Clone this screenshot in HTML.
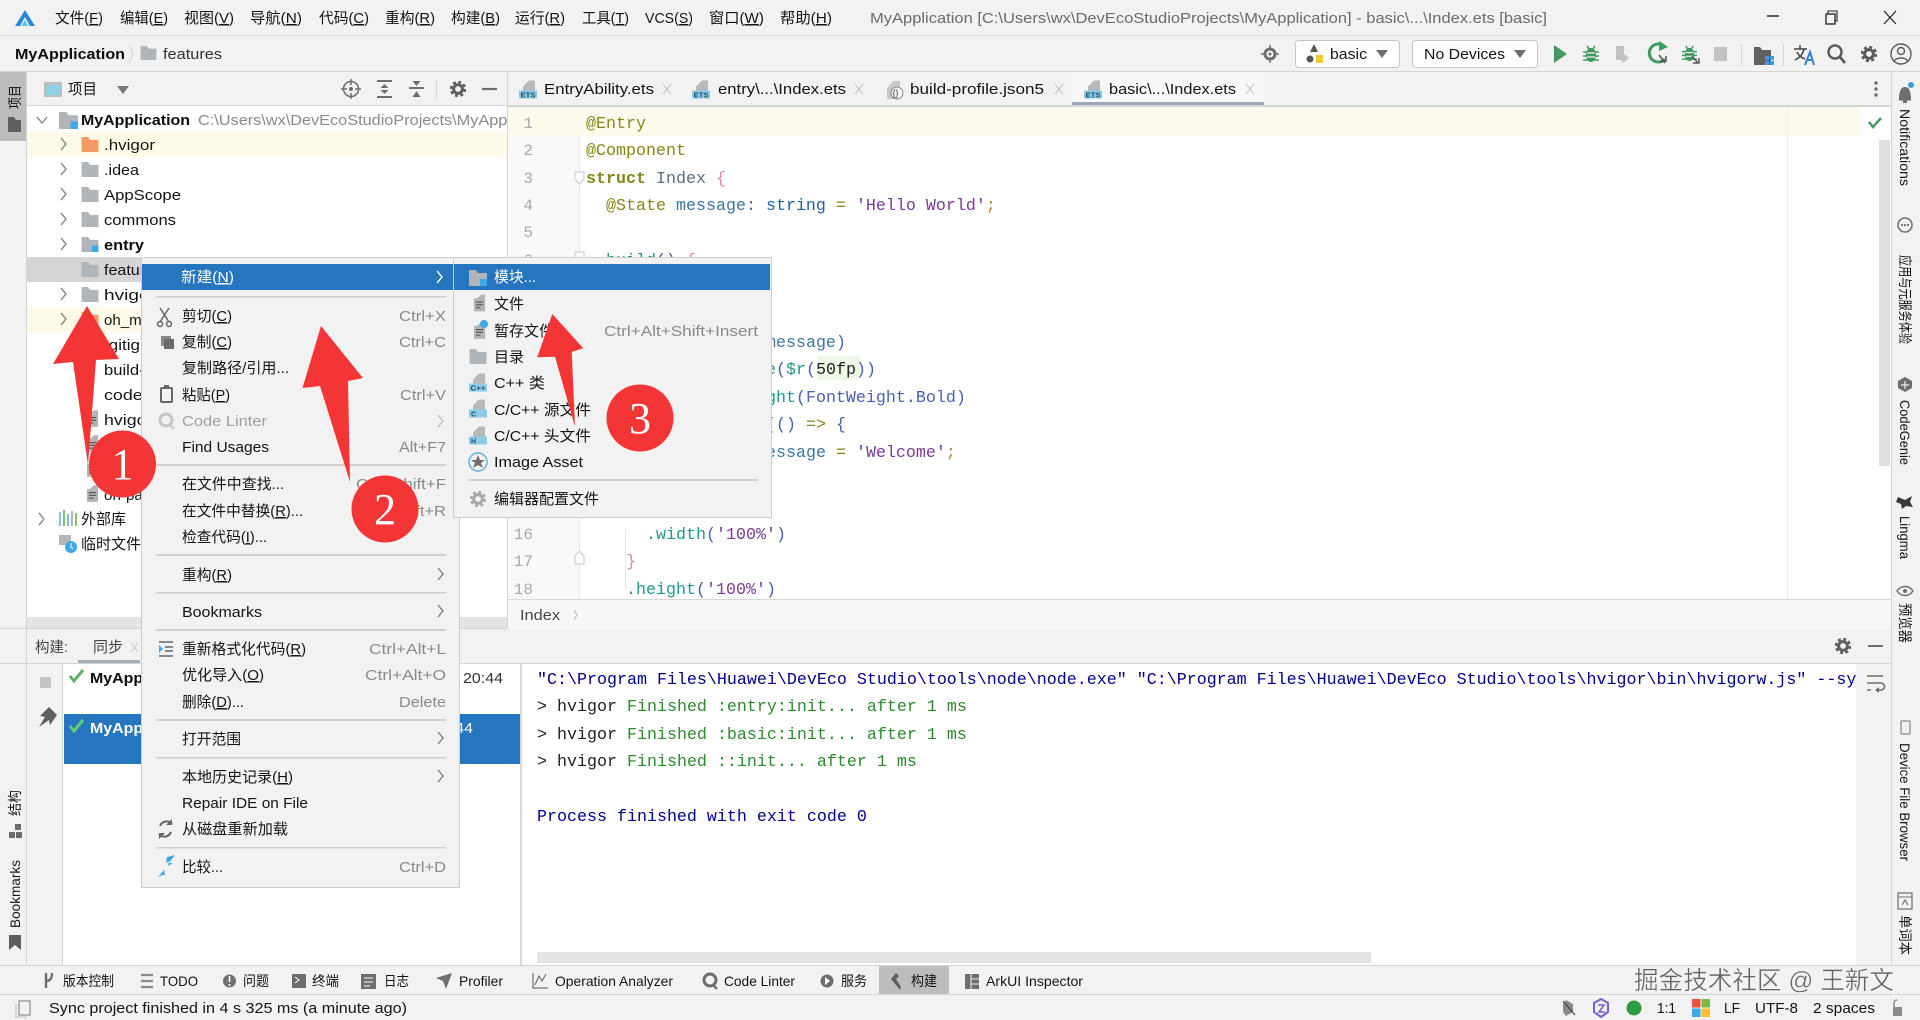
<!DOCTYPE html>
<html lang="zh"><head><meta charset="utf-8"><title>DevEco Studio</title>
<style>
html,body{margin:0;padding:0;width:1920px;height:1020px;overflow:hidden;background:#f2f2f2}
svg{display:block}
text{font-family:"Liberation Sans","Noto Sans CJK SC",sans-serif;font-size:15px;fill:#141414}
.b{font-weight:bold;fill:#0c0c0c}
.g{fill:#8a8a8a}
.t{fill:#6b6b6b}
.w{fill:#fff}
.s{font-size:14px}
.u{text-decoration:underline}
.l{font-size:7px;font-weight:bold;fill:#1c4f70}
.m{font-family:"Liberation Mono",monospace;font-size:16.67px;white-space:pre}
.n{font-family:"Liberation Mono",monospace;font-size:16px;fill:#a8a8a8;text-anchor:end}
.d{font-family:"Liberation Serif",serif;font-size:44px;fill:#fff;text-anchor:middle}
.k1{fill:#86861a}.k2{fill:#5b6c7c}.k3{fill:#d98a9a}.k4{fill:#38789f}.k5{fill:#1f5fa6}.k6{fill:#7b3a98}.k7{fill:#c08a20}.k8{fill:#1f9a8a}.k9{fill:#4a5fb0}.k0{fill:#222}
.q{fill:#00008f}.h{fill:#222}.v{fill:#2c8a2c}
</style></head><body>
<svg xmlns="http://www.w3.org/2000/svg" width="1920" height="1020" viewBox="0 0 1920 1020">
<defs>
<clipPath id="cpTree"><rect x="27" y="107" width="480" height="510"/></clipPath>
<clipPath id="cpCon"><rect x="530" y="664" width="1326" height="300"/></clipPath>
<symbol id="folder" viewBox="0 0 18 16"><path d="M0 0h7l2 3h9v13H0z" fill="#b0b5ba"/></symbol>
<symbol id="folderO" viewBox="0 0 18 16"><path d="M0 0h7l2 3h9v13H0z" fill="#f69a63"/></symbol>
<symbol id="mod" viewBox="0 0 18 16"><path d="M0 0h7l2 3h9v13H0z" fill="#b0b5ba"/><rect x="11" y="9" width="7" height="7" fill="#3fa9e8"/></symbol>
<symbol id="file" viewBox="0 0 14 18"><path d="M9 0L4 4H1v14h12V0z" fill="#b5b5b5"/><path d="M3 8h8M3 11h8M3 14h5" stroke="#555" stroke-width="1.200"/></symbol>
<symbol id="ets" viewBox="0 0 18 18"><path d="M10 0h6v10H4v-4z" fill="#b8b8b8"/><rect x="0" y="10" width="18" height="8" fill="#8ccbe6"/><text class="l" x="1.500" y="17" textLength="15" lengthAdjust="spacingAndGlyphs">ETS</text></symbol>
<symbol id="cpp" viewBox="0 0 18 18"><path d="M10 0h6v10H4v-4z" fill="#b8b8b8"/><rect x="0" y="10" width="18" height="8" fill="#8ccbe6"/><text class="l" x="1.500" y="17" textLength="15" lengthAdjust="spacingAndGlyphs">C++</text></symbol>
<symbol id="cc" viewBox="0 0 18 18"><path d="M10 0h6v10H4v-4z" fill="#b8b8b8"/><rect x="0" y="10" width="18" height="8" fill="#8ccbe6"/><text class="l" x="2" y="17">C</text></symbol>
<symbol id="hh" viewBox="0 0 18 18"><path d="M10 0h6v10H4v-4z" fill="#b8b8b8"/><rect x="0" y="10" width="18" height="8" fill="#8ccbe6"/><text class="l" x="2" y="17">H</text></symbol>
<symbol id="gear" viewBox="0 0 16 16"><circle cx="8" cy="8" r="4.400" fill="none" stroke="currentColor" stroke-width="3"/><circle cx="8" cy="8" r="7" fill="none" stroke="currentColor" stroke-width="2.400" stroke-dasharray="3 2.500"/></symbol>
<symbol id="bug" viewBox="0 0 16 18"><ellipse cx="8" cy="10" rx="5" ry="7" fill="currentColor"/><path d="M0 7h16M0 11h16M0 15h16M4 1l2 3M12 1l-2 3" stroke="currentColor" stroke-width="1.600"/><path d="M4 8h8M4 12h8" stroke="#f2f2f2" stroke-width="1.200"/></symbol>
</defs>

<rect width="1920" height="1020" fill="#f2f2f2"/>

<!-- title bar -->
<rect x="0" y="35" width="1920" height="1" fill="#d8d8d8"/>
<path d="M25 10l10 16h-5l-5-9-5 9h-5z" fill="#2a85dc"/><path d="M25 20l3.500 6h-7z" fill="#5fc4f2"/>
<text x="55" y="23" textLength="48" lengthAdjust="spacingAndGlyphs">文件(<tspan class="u">F</tspan>)</text>
<text x="120" y="23" textLength="48" lengthAdjust="spacingAndGlyphs">编辑(<tspan class="u">E</tspan>)</text>
<text x="184" y="23" textLength="50" lengthAdjust="spacingAndGlyphs">视图(<tspan class="u">V</tspan>)</text>
<text x="250" y="23" textLength="52" lengthAdjust="spacingAndGlyphs">导航(<tspan class="u">N</tspan>)</text>
<text x="319" y="23" textLength="50" lengthAdjust="spacingAndGlyphs">代码(<tspan class="u">C</tspan>)</text>
<text x="385" y="23" textLength="50" lengthAdjust="spacingAndGlyphs">重构(<tspan class="u">R</tspan>)</text>
<text x="451" y="23" textLength="49" lengthAdjust="spacingAndGlyphs">构建(<tspan class="u">B</tspan>)</text>
<text x="515" y="23" textLength="50" lengthAdjust="spacingAndGlyphs">运行(<tspan class="u">R</tspan>)</text>
<text x="582" y="23" textLength="47" lengthAdjust="spacingAndGlyphs">工具(<tspan class="u">T</tspan>)</text>
<text x="645" y="23" textLength="48" lengthAdjust="spacingAndGlyphs">VCS(<tspan class="u">S</tspan>)</text>
<text x="709" y="23" textLength="55" lengthAdjust="spacingAndGlyphs">窗口(<tspan class="u">W</tspan>)</text>
<text x="780" y="23" textLength="52" lengthAdjust="spacingAndGlyphs">帮助(<tspan class="u">H</tspan>)</text>
<text x="870" y="23" textLength="677" lengthAdjust="spacingAndGlyphs" class="t">MyApplication [C:\Users\wx\DevEcoStudioProjects\MyApplication] - basic\...\Index.ets [basic]</text>
<path d="M1767 16h12" stroke="#222" stroke-width="1.400"/>
<rect x="1826" y="14" width="9" height="10" fill="none" stroke="#222" stroke-width="1.300"/><path d="M1828 14v-3h9v10h-2" fill="none" stroke="#222" stroke-width="1.100"/>
<path d="M1884 11l12 13M1896 11l-12 13" stroke="#222" stroke-width="1.200"/>

<!-- nav bar -->
<rect x="0" y="71" width="1920" height="1" fill="#d4d4d4"/>
<text x="15" y="59" textLength="110" lengthAdjust="spacingAndGlyphs" class="b">MyApplication</text>
<path d="M129 45l4 9-4 9" fill="none" stroke="#cfcfcf"/>
<use href="#folder" x="140" y="46" width="17" height="14"/>
<text x="163" y="59" textLength="59" lengthAdjust="spacingAndGlyphs" style="fill:#333">features</text>
<circle cx="1270" cy="54" r="5" fill="none" stroke="#6e6e6e" stroke-width="3"/><circle cx="1270" cy="54" r="1.500" fill="#6e6e6e"/><path d="M1270 45v3M1270 60v3M1261 54h3M1276 54h3" stroke="#6e6e6e" stroke-width="1.500"/>
<rect x="1295.500" y="40.500" width="104" height="27" rx="3" fill="#fff" stroke="#c6c6c6"/>
<path d="M1314 44l4 8h-8z" fill="#555"/><circle cx="1310" cy="59" r="3.500" fill="#555"/><rect x="1316" y="55" width="7" height="8" fill="#f3c63c"/>
<text x="1330" y="59" textLength="37" lengthAdjust="spacingAndGlyphs">basic</text>
<path d="M1376 50h12l-6 8z" fill="#6e6e6e"/>
<rect x="1412.500" y="40.500" width="125" height="27" rx="3" fill="#fff" stroke="#c6c6c6"/>
<text x="1424" y="59" textLength="81" lengthAdjust="spacingAndGlyphs">No Devices</text>
<path d="M1514 50h12l-6 8z" fill="#6e6e6e"/>
<path d="M1554 45l13 9-13 9z" fill="#3f9b5f"/>
<use href="#bug" x="1583" y="45" width="16" height="18" color="#3f9b5f"/>
<path d="M1616 46h8v8l5 4-6 5-2-3h-5z" fill="#c2c2c2"/>
<path d="M1665 47a9 9 0 1 0 0 12" fill="none" stroke="#3f9b5f" stroke-width="3"/><path d="M1659 41l9 6-9 4z" fill="#3f9b5f"/><path d="M1659 55l6 8M1660 62l6-1 0-5" stroke="#555" stroke-width="1.500" fill="none"/>
<use href="#bug" x="1682" y="45" width="15" height="17" color="#3f9b5f"/><path d="M1692 56l6 7M1693 63h6v-5" stroke="#555" stroke-width="1.500" fill="none"/>
<rect x="1714" y="47" width="13" height="14" fill="#c2c2c2"/>
<rect x="1741" y="44" width="1" height="22" fill="#d4d4d4"/>
<path d="M1754 47h6l2 3h9v15h-17z" fill="#606060"/><rect x="1765" y="56" width="4" height="4" fill="#3f9be0"/><rect x="1770" y="56" width="4" height="4" fill="#3f9be0"/><rect x="1765" y="61" width="4" height="4" fill="#3f9be0"/><rect x="1770" y="61" width="4" height="4" fill="#3f9be0"/>
<rect x="1783" y="44" width="1" height="22" fill="#d4d4d4"/>
<path d="M1794 49h13M1800 45v4M1804 49c-1 6-5 9-9 11M1797 52c2 4 5 6 8 7" fill="none" stroke="#444" stroke-width="1.500"/><path d="M1805 65l5-13 4 13M1807 60h6" fill="none" stroke="#2f7fd0" stroke-width="2"/>
<circle cx="1835" cy="52" r="6.500" fill="none" stroke="#5a5a5a" stroke-width="2.400"/><path d="M1840 57l5 6" stroke="#5a5a5a" stroke-width="2.600"/>
<use href="#gear" x="1861" y="46" width="16" height="16" color="#5a5a5a"/>
<circle cx="1901" cy="54" r="10" fill="none" stroke="#5a5a5a" stroke-width="1.400"/><circle cx="1901" cy="51" r="3.500" fill="none" stroke="#5a5a5a" stroke-width="1.400"/><path d="M1894 61c3-4 11-4 14 0" fill="none" stroke="#5a5a5a" stroke-width="1.400"/>

<!-- left stripe -->
<rect x="0" y="72" width="27" height="69" fill="#bdbdbd"/>
<rect x="26" y="72" width="1" height="893" fill="#d4d4d4"/>
<text transform="translate(20,109) rotate(-90)" class="s" textLength="24" lengthAdjust="spacingAndGlyphs">项目</text>
<path d="M8 117h6l2 3h5v12H8z" fill="#5f5f5f"/>
<text transform="translate(20,816) rotate(-90)" class="s" textLength="26" lengthAdjust="spacingAndGlyphs">结构</text>
<rect x="15" y="824" width="6" height="6" fill="#6b6b6b"/><rect x="9" y="832" width="6" height="6" fill="#6b6b6b"/><rect x="16" y="832" width="6" height="6" fill="#6b6b6b"/>
<text transform="translate(20,928) rotate(-90)" class="s" textLength="68" lengthAdjust="spacingAndGlyphs">Bookmarks</text>
<path d="M9 935h12v15l-6-5-6 5z" fill="#5f5f5f"/>

<!-- project panel -->
<rect x="27" y="72" width="480" height="34" fill="#f2f2f2"/>
<rect x="27" y="105" width="480" height="1" fill="#d4d4d4"/>
<rect x="44" y="82" width="18" height="15" fill="#bdbdbd"/><rect x="46" y="85" width="14" height="10" fill="#8ed0ea"/>
<text x="68" y="94" textLength="29" lengthAdjust="spacingAndGlyphs">项目</text>
<path d="M117 86h12l-6 8z" fill="#777"/>
<circle cx="351" cy="89" r="7.500" fill="none" stroke="#6e6e6e" stroke-width="1.500"/><circle cx="351" cy="89" r="2" fill="#6e6e6e"/><path d="M351 79v6M351 93v6M341 89h6M355 89h6" stroke="#6e6e6e" stroke-width="1.500"/>
<path d="M377 81h15M377 97h15" stroke="#6e6e6e" stroke-width="2"/><path d="M384.500 84l4 4h-8zM384.500 94l4-4h-8z" fill="#6e6e6e"/>
<path d="M409 88h15" stroke="#6e6e6e" stroke-width="2"/><path d="M416.500 86l4-5h-8zM416.500 91l4 6h-8z" fill="#6e6e6e"/>
<rect x="436" y="80" width="1" height="20" fill="#d4d4d4"/>
<use href="#gear" x="450" y="81" width="16" height="16" color="#5f5f5f"/>
<path d="M482 89h15" stroke="#6e6e6e" stroke-width="2.200"/>
<rect x="27" y="106" width="480" height="511" fill="#fff"/>
<rect x="27" y="132" width="480" height="25" fill="#fdfbe7"/>
<rect x="27" y="307" width="480" height="25" fill="#fdfbe7"/>
<rect x="27" y="257" width="480" height="25" fill="#d5d5d5"/>
<g fill="none" stroke="#8a8a8a" stroke-width="1.400">
<path d="M37 117l5 6 5-6"/>
<path d="M61 138l5 6-5 6M61 163l5 6-5 6M61 188l5 6-5 6M61 213l5 6-5 6M61 238l5 6-5 6M61 288l5 6-5 6M61 313l5 6-5 6M39 513l5 6-5 6"/>
</g>
<use href="#mod" x="59" y="112" width="19" height="17"/>
<use href="#folderO" x="81" y="137" width="18" height="15"/>
<use href="#folder" x="81" y="162" width="18" height="15"/>
<use href="#folder" x="81" y="187" width="18" height="15"/>
<use href="#folder" x="81" y="212" width="18" height="15"/>
<use href="#mod" x="81" y="237" width="18" height="15"/>
<use href="#folder" x="81" y="262" width="18" height="15"/>
<use href="#folder" x="81" y="287" width="18" height="15"/>
<use href="#folderO" x="81" y="312" width="18" height="15"/>
<use href="#file" x="86" y="410" width="13" height="17"/>
<use href="#file" x="86" y="435" width="13" height="17"/>
<use href="#file" x="86" y="460" width="13" height="17"/>
<use href="#file" x="86" y="485" width="13" height="17"/>
<g clip-path="url(#cpTree)">
<text x="81" y="125" textLength="109" lengthAdjust="spacingAndGlyphs" class="b">MyApplication</text>
<text x="198" y="125" textLength="360" lengthAdjust="spacingAndGlyphs" class="g">C:\Users\wx\DevEcoStudioProjects\MyApplication</text>
</g>
<text x="104" y="150" textLength="51" lengthAdjust="spacingAndGlyphs">.hvigor</text>
<text x="104" y="175" textLength="35" lengthAdjust="spacingAndGlyphs">.idea</text>
<text x="104" y="200" textLength="77" lengthAdjust="spacingAndGlyphs">AppScope</text>
<text x="104" y="225" textLength="72" lengthAdjust="spacingAndGlyphs">commons</text>
<text x="104" y="250" textLength="40" lengthAdjust="spacingAndGlyphs" class="b">entry</text>
<text x="104" y="275" textLength="58" lengthAdjust="spacingAndGlyphs">features</text>
<text x="104" y="300" textLength="52" lengthAdjust="spacingAndGlyphs">hvigor</text>
<text x="104" y="325" textLength="82" lengthAdjust="spacingAndGlyphs">oh_modules</text>
<text x="104" y="350" textLength="70" lengthAdjust="spacingAndGlyphs">.gitignore</text>
<text x="104" y="375" textLength="130" lengthAdjust="spacingAndGlyphs">build-profile.json5</text>
<text x="104" y="400" textLength="130" lengthAdjust="spacingAndGlyphs">code-linter.json5</text>
<text x="104" y="425" textLength="90" lengthAdjust="spacingAndGlyphs">hvigorfile.ts</text>
<text x="104" y="500" textLength="120" lengthAdjust="spacingAndGlyphs">oh-package.json5</text>
<rect x="59" y="512" width="2" height="14" fill="#7cc4e2"/><rect x="63" y="510" width="2" height="16" fill="#8bbf6a"/><rect x="67" y="514" width="2" height="12" fill="#7cc4e2"/><rect x="71" y="511" width="2" height="15" fill="#b5b5b5"/><rect x="75" y="513" width="2" height="13" fill="#8bbf6a"/>
<text x="81" y="524" textLength="45" lengthAdjust="spacingAndGlyphs">外部库</text>
<rect x="59" y="535" width="12" height="10" fill="#b5b5b5"/><circle cx="71" cy="547" r="6" fill="#3fa9e8"/><path d="M71 543v4l2 2" stroke="#fff" fill="none"/>
<text x="81" y="549" textLength="60" lengthAdjust="spacingAndGlyphs">临时文件</text>
<rect x="27" y="617" width="480" height="11" fill="#e4e4e4"/>
<rect x="0" y="628" width="1892" height="1" fill="#d4d4d4"/>

<!-- editor tabs -->
<rect x="507" y="72" width="1" height="556" fill="#d4d4d4"/>
<rect x="1072" y="72" width="192" height="34" fill="#f8f8f8"/>
<rect x="1072" y="102" width="192" height="4" fill="#9ca8b8"/>
<rect x="508" y="105" width="1384" height="2" fill="#d4d4d4"/>
<use href="#ets" x="519" y="80" width="18" height="19"/>
<text x="544" y="94" textLength="110" lengthAdjust="spacingAndGlyphs">EntryAbility.ets</text>
<path d="M663 84l8 10M671 84l-8 10" stroke="#c8c8c8" stroke-width="1.200"/>
<use href="#ets" x="692" y="80" width="18" height="19"/>
<text x="718" y="94" textLength="128" lengthAdjust="spacingAndGlyphs">entry\...\Index.ets</text>
<path d="M855 84l8 10M863 84l-8 10" stroke="#c8c8c8" stroke-width="1.200"/>
<path d="M893 81h7v18h-13v-11z" fill="#c8c8c8"/><circle cx="897" cy="93" r="6" fill="#f2f2f2" stroke="#888"/><text x="892.500" y="96" style="font-size:9px;fill:#444">{}</text>
<text x="910" y="94" textLength="134" lengthAdjust="spacingAndGlyphs">build-profile.json5</text>
<path d="M1055 84l8 10M1063 84l-8 10" stroke="#c8c8c8" stroke-width="1.200"/>
<use href="#ets" x="1084" y="80" width="18" height="19"/>
<text x="1109" y="94" textLength="127" lengthAdjust="spacingAndGlyphs">basic\...\Index.ets</text>
<path d="M1246 84l8 10M1254 84l-8 10" stroke="#c8c8c8" stroke-width="1.200"/>
<circle cx="1876" cy="83" r="1.700" fill="#6e6e6e"/><circle cx="1876" cy="89" r="1.700" fill="#6e6e6e"/><circle cx="1876" cy="95" r="1.700" fill="#6e6e6e"/>

<!-- editor -->
<rect x="508" y="107" width="1384" height="492" fill="#fff"/>
<rect x="508" y="107" width="71" height="492" fill="#f9f9f9"/>
<rect x="579" y="107" width="1" height="492" fill="#e8e8e8"/>
<rect x="508" y="107" width="1352" height="29" fill="#fcfaed"/>
<rect x="1787" y="107" width="1" height="492" fill="#ececec"/>
<rect x="1879" y="140" width="11" height="326" fill="#e0e0e0"/>
<path d="M1869 122l4 5 8-9" fill="none" stroke="#4f9a6a" stroke-width="2.600"/>
<rect x="625" y="530" width="1" height="60" fill="#e6e6e6"/>
<path d="M575 172h9v7l-4.500 5-4.500-5z" fill="#fff" stroke="#c8c8c8"/>
<path d="M575 252h9v7l-4.500 5-4.500-5z" fill="#fff" stroke="#c8c8c8"/>
<path d="M575 564h9v-8l-4.500-5-4.500 5z" fill="#fff" stroke="#c8c8c8"/>
<text class="n" x="533" y="128">1</text><text class="n" x="533" y="155">2</text><text class="n" x="533" y="183">3</text><text class="n" x="533" y="210">4</text><text class="n" x="533" y="237">5</text><text class="n" x="533" y="265">6</text>
<text class="n" x="533" y="539">16</text><text class="n" x="533" y="566">17</text><text class="n" x="533" y="594">18</text>
<text class="m" x="586" y="128"><tspan class="k1">@Entry</tspan></text>
<text class="m" x="586" y="155"><tspan class="k1">@Component</tspan></text>
<text class="m" x="586" y="183"><tspan class="k1" font-weight="bold">struct</tspan><tspan class="k2"> Index </tspan><tspan class="k3">{</tspan></text>
<text class="m" x="606" y="210"><tspan class="k1">@State</tspan><tspan class="k4"> message</tspan><tspan class="k2">: </tspan><tspan class="k5">string</tspan><tspan class="k1"> = </tspan><tspan class="k6">'Hello World'</tspan><tspan class="k7">;</tspan></text>
<text class="m" x="606" y="265"><tspan class="k8">build</tspan><tspan class="k9">()</tspan><tspan class="k3"> {</tspan></text>
<rect x="818" y="356" width="42" height="24" fill="#eef7e6"/>
<text class="m" x="666" y="347"><tspan class="k8">Text</tspan><tspan class="k9">(</tspan><tspan class="k4">this.message</tspan><tspan class="k9">)</tspan></text>
<text class="m" x="686" y="374"><tspan class="k8">.fontSize</tspan><tspan class="k9">(</tspan><tspan class="k8">$r</tspan><tspan class="k9">(</tspan><tspan class="k0">50fp</tspan><tspan class="k9">))</tspan></text>
<text class="m" x="686" y="402"><tspan class="k8">.fontWeight</tspan><tspan class="k9">(FontWeight.Bold)</tspan></text>
<text class="m" x="686" y="429"><tspan class="k8">.onClick</tspan><tspan class="k9">(()</tspan><tspan class="k1"> =&gt; </tspan><tspan class="k9">{</tspan></text>
<text class="m" x="706" y="457"><tspan class="k4">this.message</tspan><tspan class="k1"> = </tspan><tspan class="k6">'Welcome'</tspan><tspan class="k7">;</tspan></text>
<text class="m" x="646" y="539"><tspan class="k8">.width</tspan><tspan class="k9">(</tspan><tspan class="k6">'100%'</tspan><tspan class="k9">)</tspan></text>
<text class="m" x="626" y="566"><tspan class="k3">}</tspan></text>
<text class="m" x="626" y="594"><tspan class="k8">.height</tspan><tspan class="k9">(</tspan><tspan class="k6">'100%'</tspan><tspan class="k9">)</tspan></text>
<rect x="508" y="599" width="1384" height="30" fill="#f7f7f7"/>
<rect x="508" y="599" width="1384" height="1" fill="#d8d8d8"/>
<text x="520" y="620" textLength="40" lengthAdjust="spacingAndGlyphs" style="fill:#444">Index</text>
<path d="M574 610l3 5-3 5" fill="none" stroke="#bcbcbc" stroke-width="1.200"/>

<!-- build window -->
<rect x="0" y="663" width="1892" height="1" fill="#d4d4d4"/>
<text x="35" y="652" textLength="33" lengthAdjust="spacingAndGlyphs" style="fill:#444">构建:</text>
<text x="93" y="652" textLength="30" lengthAdjust="spacingAndGlyphs" style="fill:#444">同步</text>
<rect x="78" y="660" width="62" height="3" fill="#a4afbd"/>
<path d="M131 643l7 9M138 643l-7 9" stroke="#c8c8c8"/>
<use href="#gear" x="1835" y="638" width="16" height="16" color="#5f5f5f"/>
<path d="M1868 646h15" stroke="#6e6e6e" stroke-width="2"/>
<rect x="62" y="664" width="1" height="301" fill="#d4d4d4"/>
<rect x="63" y="664" width="457" height="301" fill="#fff"/>
<rect x="520" y="664" width="2" height="301" fill="#d8d8d8"/>
<rect x="522" y="664" width="1334" height="301" fill="#fff"/>
<rect x="40" y="677" width="11" height="11" fill="#c4c4c4"/>
<path d="M49 707l-9 9 5 1-6 10 10-7 1 5 7-10z" fill="#5f5f5f"/>
<path d="M70 676l4 5 9-11" fill="none" stroke="#5cb36b" stroke-width="3"/>
<text x="90" y="683" textLength="109" lengthAdjust="spacingAndGlyphs" class="b">MyApplication</text>
<text x="463" y="683" textLength="40" lengthAdjust="spacingAndGlyphs" style="fill:#333">20:44</text>
<rect x="64" y="714" width="456" height="50" fill="#2675bf"/>
<path d="M70 726l4 5 9-11" fill="none" stroke="#66cc77" stroke-width="3"/>
<text x="90" y="733" textLength="109" lengthAdjust="spacingAndGlyphs" class="b" style="fill:#fff">MyApplication</text>
<text x="433" y="733" textLength="40" lengthAdjust="spacingAndGlyphs" class="w">20:44</text>
<g clip-path="url(#cpCon)">
<text class="m q" x="537" y="684">"C:\Program Files\Huawei\DevEco Studio\tools\node\node.exe" "C:\Program Files\Huawei\DevEco Studio\tools\hvigor\bin\hvigorw.js" --sy</text>
<text class="m" x="537" y="711"><tspan class="h">&gt; hvigor </tspan><tspan class="v">Finished :entry:init... after 1 ms</tspan></text>
<text class="m" x="537" y="739"><tspan class="h">&gt; hvigor </tspan><tspan class="v">Finished :basic:init... after 1 ms</tspan></text>
<text class="m" x="537" y="766"><tspan class="h">&gt; hvigor </tspan><tspan class="v">Finished ::init... after 1 ms</tspan></text>
<text class="m q" x="537" y="821">Process finished with exit code 0</text>
</g>
<rect x="537" y="952" width="834" height="11" fill="#e3e3e3"/>
<path d="M1867 676h16M1867 683h14a3 3 0 0 1 0 7h-5M1867 690h4" fill="none" stroke="#6e6e6e" stroke-width="1.600"/><path d="M1879 687l-4 3 4 3z" fill="#6e6e6e"/>

<!-- right stripe -->
<rect x="1891" y="72" width="1" height="893" fill="#d4d4d4"/>
<path d="M1899 100c0-11 3-13 6-13s6 2 6 13zM1897 100h16l-8 1z" fill="#6e6e6e"/><circle cx="1911" cy="85" r="3" fill="#3f9be0"/><path d="M1903 102h4" stroke="#6e6e6e" stroke-width="2"/>
<text transform="translate(1900,109) rotate(90)" class="s" textLength="77" lengthAdjust="spacingAndGlyphs">Notifications</text>
<circle cx="1905" cy="225" r="7" fill="none" stroke="#6e6e6e" stroke-width="1.500"/><circle cx="1902" cy="225" r="1.100" fill="#6e6e6e"/><circle cx="1905" cy="225" r="1.100" fill="#6e6e6e"/><circle cx="1908" cy="225" r="1.100" fill="#6e6e6e"/>
<text transform="translate(1900,255) rotate(90)" class="s" textLength="89" lengthAdjust="spacingAndGlyphs">应用与元服务体验</text>
<path d="M1905 377l7 4v7l-7 4-7-4v-7z" fill="#6e6e6e"/><path d="M1905 381v8M1901 385h8" stroke="#f2f2f2" stroke-width="1.200"/>
<text transform="translate(1900,400) rotate(90)" class="s" textLength="65" lengthAdjust="spacingAndGlyphs">CodeGenie</text>
<path d="M1898 497l7 3 7-4-2 6 3 5-7-1-4 3-1-5-5-2z" fill="#3a3a3a"/>
<text transform="translate(1900,516) rotate(90)" class="s" textLength="43" lengthAdjust="spacingAndGlyphs">Lingma</text>
<path d="M1897 591c4-6 12-6 16 0-4 6-12 6-16 0z" fill="none" stroke="#6e6e6e" stroke-width="1.400"/><circle cx="1905" cy="591" r="2" fill="#6e6e6e"/>
<text transform="translate(1900,603) rotate(90)" class="s" textLength="40" lengthAdjust="spacingAndGlyphs">预览器</text>
<rect x="1901" y="721" width="9" height="13" rx="1" fill="none" stroke="#9a9a9a" stroke-width="1.500"/>
<text transform="translate(1900,743) rotate(90)" class="s" textLength="118" lengthAdjust="spacingAndGlyphs">Device File Browser</text>
<rect x="1898" y="893" width="14" height="16" fill="none" stroke="#6e6e6e" stroke-width="1.200"/><path d="M1898 897h14M1902 905l3-5 3 5" fill="none" stroke="#6e6e6e" stroke-width="1.100"/>
<text transform="translate(1900,915) rotate(90)" class="s" textLength="40" lengthAdjust="spacingAndGlyphs">单词本</text>

<!-- bottom tool bar -->
<rect x="0" y="965" width="1920" height="1" fill="#d4d4d4"/>
<rect x="0" y="994" width="1920" height="1" fill="#d4d4d4"/>
<rect x="879" y="966" width="70" height="28" fill="#bdbdbd"/>
<path d="M46 973v15M46 981c3 0 6-1 6-8" fill="none" stroke="#6e6e6e" stroke-width="2.400"/>
<text x="63" y="986" class="s" textLength="51" lengthAdjust="spacingAndGlyphs">版本控制</text>
<path d="M141 975h12M141 981h12M141 987h12" stroke="#8a8a8a" stroke-width="2.200"/>
<text x="160" y="986" class="s" textLength="38" lengthAdjust="spacingAndGlyphs">TODO</text>
<circle cx="229.500" cy="981" r="6.500" fill="#6e6e6e"/><path d="M229.500 976v6M229.500 984v2" stroke="#fff" stroke-width="1.600"/>
<text x="243" y="986" class="s" textLength="26" lengthAdjust="spacingAndGlyphs">问题</text>
<rect x="292" y="974" width="14" height="14" fill="#6e6e6e"/><path d="M295 977l4 3-4 3" fill="none" stroke="#fff"/>
<text x="312" y="986" class="s" textLength="27" lengthAdjust="spacingAndGlyphs">终端</text>
<rect x="361" y="974" width="15" height="15" fill="#6e6e6e"/><path d="M364 978h9M364 982h9M364 986h6" stroke="#fff"/>
<text x="384" y="986" class="s" textLength="25" lengthAdjust="spacingAndGlyphs">日志</text>
<path d="M452 973l-16 5 7 3 3 8 3-8z" fill="#6e6e6e"/>
<text x="459" y="986" class="s" textLength="44" lengthAdjust="spacingAndGlyphs">Profiler</text>
<path d="M533 973v15h15M535 985l4-9 3 5 4-7" fill="none" stroke="#6e6e6e" stroke-width="1.200"/>
<text x="555" y="986" class="s" textLength="118" lengthAdjust="spacingAndGlyphs">Operation Analyzer</text>
<circle cx="710" cy="980" r="6" fill="none" stroke="#6e6e6e" stroke-width="3"/><path d="M713 985l4 4" stroke="#6e6e6e" stroke-width="2.400"/>
<text x="724" y="986" class="s" textLength="71" lengthAdjust="spacingAndGlyphs">Code Linter</text>
<circle cx="827" cy="981" r="6.500" fill="#6e6e6e"/><path d="M825 977l5 4-5 4z" fill="#fff"/>
<text x="841" y="986" class="s" textLength="26" lengthAdjust="spacingAndGlyphs">服务</text>
<path d="M896 973l-5 6 9 11 1-3-5-8 3-3z" fill="#5f5f5f"/>
<text x="911" y="986" class="s" textLength="26" lengthAdjust="spacingAndGlyphs">构建</text>
<rect x="965" y="974" width="14" height="15" fill="#6e6e6e"/><path d="M971 974v15M971 979h8M971 984h8" stroke="#f2f2f2"/>
<text x="986" y="986" class="s" textLength="97" lengthAdjust="spacingAndGlyphs">ArkUI Inspector</text>
<text x="1634" y="989" style="font-size:25px;fill:#666;stroke:#fff;stroke-width:.3px" textLength="260" lengthAdjust="spacingAndGlyphs">掘金技术社区 @ 王新文</text>

<!-- status bar -->
<rect x="19" y="1001" width="11" height="14" fill="none" stroke="#8a8a8a" stroke-width="1.200"/><path d="M16 1004v13h11" fill="none" stroke="#bcbcbc"/>
<text x="49" y="1013" textLength="358" lengthAdjust="spacingAndGlyphs">Sync project finished in 4 s 325 ms (a minute ago)</text>
<path d="M1566 1000l7 4v8l-7 4-3-4v-8z" fill="#8a8a8a"/><path d="M1563 1001l12 14" stroke="#444" stroke-width="1.200"/>
<path d="M1601 999l7 4v9l-7 5-7-5v-9z" fill="none" stroke="#7a5fd0" stroke-width="2"/><path d="M1598 1005h6l-5 7h6" fill="none" stroke="#7a5fd0" stroke-width="1.600"/>
<circle cx="1634" cy="1008" r="7.500" fill="#2f9a3f"/>
<text x="1657" y="1013" textLength="19" lengthAdjust="spacingAndGlyphs">1:1</text>
<rect x="1692" y="999" width="8.500" height="8.500" fill="#e8523f"/><rect x="1701.500" y="999" width="8.500" height="8.500" fill="#7fba3c"/><rect x="1692" y="1008.500" width="8.500" height="8.500" fill="#3fa9e8"/><rect x="1701.500" y="1008.500" width="8.500" height="8.500" fill="#f6c02c"/>
<text x="1724" y="1013" textLength="16" lengthAdjust="spacingAndGlyphs">LF</text>
<text x="1755" y="1013" textLength="43" lengthAdjust="spacingAndGlyphs">UTF-8</text>
<text x="1813" y="1013" textLength="62" lengthAdjust="spacingAndGlyphs">2 spaces</text>
<rect x="1893" y="1007" width="9" height="9" fill="#8a8a8a"/><path d="M1894 1007v-4a3 3 0 0 1 3-3" fill="none" stroke="#8a8a8a" stroke-width="1.500"/>

<!-- main context menu -->
<rect x="141.500" y="257.500" width="318" height="630" fill="#f2f2f2" stroke="#cdcdcd"/>
<rect x="142" y="264" width="311" height="26" fill="#2675bf"/>
<text x="181" y="282" textLength="53" lengthAdjust="spacingAndGlyphs" class="w">新建(<tspan class="u w">N</tspan>)</text>
<path d="M437 271l5 6-5 6" fill="none" stroke="#fff" stroke-width="1.400"/>
<g fill="#cfcfcf"><rect x="156" y="296" width="290" height="1.500"/><rect x="156" y="464" width="290" height="2"/><rect x="156" y="554" width="290" height="2"/><rect x="156" y="592" width="290" height="1.500"/><rect x="156" y="629" width="290" height="2"/><rect x="156" y="719" width="290" height="2"/><rect x="156" y="757" width="290" height="1.500"/><rect x="156" y="847" width="290" height="1.500"/></g>
<path d="M160 308l9 14M169 308l-9 14" stroke="#666" stroke-width="1.500"/><circle cx="160" cy="324" r="2.500" fill="none" stroke="#666" stroke-width="1.500"/><circle cx="169" cy="324" r="2.500" fill="none" stroke="#666" stroke-width="1.500"/>
<text x="182" y="321" textLength="50" lengthAdjust="spacingAndGlyphs">剪切(<tspan class="u">C</tspan>)</text>
<text x="446" y="321" text-anchor="end" class="g" textLength="47" lengthAdjust="spacingAndGlyphs">Ctrl+X</text>
<rect x="161" y="336" width="10" height="10" fill="#8a8a8a"/><rect x="164" y="339" width="10" height="10" fill="#6a6a6a"/>
<text x="182" y="347" textLength="50" lengthAdjust="spacingAndGlyphs">复制(<tspan class="u">C</tspan>)</text>
<text x="446" y="347" text-anchor="end" class="g" textLength="47" lengthAdjust="spacingAndGlyphs">Ctrl+C</text>
<text x="182" y="373" textLength="107" lengthAdjust="spacingAndGlyphs">复制路径/引用...</text>
<rect x="161" y="388" width="11" height="14" rx="1" fill="none" stroke="#666" stroke-width="2"/><rect x="164" y="385" width="5" height="4" fill="#666"/>
<text x="182" y="400" textLength="48" lengthAdjust="spacingAndGlyphs">粘贴(<tspan class="u">P</tspan>)</text>
<text x="446" y="400" text-anchor="end" class="g" textLength="46" lengthAdjust="spacingAndGlyphs">Ctrl+V</text>
<circle cx="166" cy="420" r="6" fill="none" stroke="#c4c4c4" stroke-width="3"/><path d="M170 425l4 4" stroke="#c4c4c4" stroke-width="2"/>
<text x="182" y="426" textLength="85" lengthAdjust="spacingAndGlyphs" style="fill:#a0a0a0">Code Linter</text>
<path d="M438 415l5 6-5 6" fill="none" stroke="#bbb" stroke-width="1.300"/>
<text x="182" y="452" textLength="87" lengthAdjust="spacingAndGlyphs">Find Usages</text>
<text x="446" y="452" text-anchor="end" class="g" textLength="47" lengthAdjust="spacingAndGlyphs">Alt+F7</text>
<text x="182" y="489" textLength="102" lengthAdjust="spacingAndGlyphs">在文件中查找...</text>
<text x="446" y="489" text-anchor="end" class="g" textLength="90" lengthAdjust="spacingAndGlyphs">Ctrl+Shift+F</text>
<text x="182" y="516" textLength="121" lengthAdjust="spacingAndGlyphs">在文件中替换(<tspan class="u">R</tspan>)...</text>
<text x="446" y="516" text-anchor="end" class="g" textLength="90" lengthAdjust="spacingAndGlyphs">Ctrl+Shift+R</text>
<text x="182" y="542" textLength="85" lengthAdjust="spacingAndGlyphs">检查代码(<tspan class="u">I</tspan>)...</text>
<text x="182" y="580" textLength="50" lengthAdjust="spacingAndGlyphs">重构(<tspan class="u">R</tspan>)</text>
<path d="M438 568l5 6-5 6" fill="none" stroke="#777" stroke-width="1.300"/>
<text x="182" y="617" textLength="80" lengthAdjust="spacingAndGlyphs">Bookmarks</text>
<path d="M438 605l5 6-5 6" fill="none" stroke="#777" stroke-width="1.300"/>
<path d="M159 642h14M159 656h14M165 647h8M165 651h8" stroke="#666" stroke-width="1.600"/><path d="M159 645l4 4-4 4z" fill="#3fa9e8"/>
<text x="182" y="654" textLength="124" lengthAdjust="spacingAndGlyphs">重新格式化代码(<tspan class="u">R</tspan>)</text>
<text x="446" y="654" text-anchor="end" class="g" textLength="77" lengthAdjust="spacingAndGlyphs">Ctrl+Alt+L</text>
<text x="182" y="680" textLength="82" lengthAdjust="spacingAndGlyphs">优化导入(<tspan class="u">O</tspan>)</text>
<text x="446" y="680" text-anchor="end" class="g" textLength="81" lengthAdjust="spacingAndGlyphs">Ctrl+Alt+O</text>
<text x="182" y="707" textLength="62" lengthAdjust="spacingAndGlyphs">删除(<tspan class="u">D</tspan>)...</text>
<text x="446" y="707" text-anchor="end" class="g" textLength="47" lengthAdjust="spacingAndGlyphs">Delete</text>
<text x="182" y="744" textLength="59" lengthAdjust="spacingAndGlyphs">打开范围</text>
<path d="M438 732l5 6-5 6" fill="none" stroke="#777" stroke-width="1.300"/>
<text x="182" y="782" textLength="111" lengthAdjust="spacingAndGlyphs">本地历史记录(<tspan class="u">H</tspan>)</text>
<path d="M438 770l5 6-5 6" fill="none" stroke="#777" stroke-width="1.300"/>
<text x="182" y="808" textLength="126" lengthAdjust="spacingAndGlyphs">Repair IDE on File</text>
<path d="M172 824a7 7 0 0 0-12 2M159 834a7 7 0 0 0 12-2" fill="none" stroke="#666" stroke-width="2"/><path d="M172 819v6h-6zM159 839v-6h6z" fill="#666"/>
<text x="182" y="834" textLength="106" lengthAdjust="spacingAndGlyphs">从磁盘重新加载</text>
<path d="M175 855l-6 8h4l-5 3 1-5-3 2 1-6z" fill="#3fa9e8"/><path d="M158 877l6-7 1 5-3 0z" fill="#3fa9e8"/>
<text x="182" y="872" textLength="41" lengthAdjust="spacingAndGlyphs">比较...</text>
<text x="446" y="872" text-anchor="end" class="g" textLength="47" lengthAdjust="spacingAndGlyphs">Ctrl+D</text>

<!-- submenu -->
<rect x="453.500" y="257.500" width="318" height="260" fill="#f2f2f2" stroke="#cdcdcd"/>
<rect x="454" y="264" width="316" height="26" fill="#2675bf"/>
<use href="#mod" x="469" y="270" width="18" height="16"/>
<text x="494" y="282" textLength="42" lengthAdjust="spacingAndGlyphs" class="w">模块...</text>
<use href="#file" x="473" y="294" width="13" height="18"/>
<text x="494" y="309" textLength="30" lengthAdjust="spacingAndGlyphs">文件</text>
<use href="#file" x="473" y="322" width="13" height="17"/><circle cx="484" cy="324" r="4" fill="#3fa9e8"/>
<text x="494" y="336" textLength="60" lengthAdjust="spacingAndGlyphs">暂存文件</text>
<text x="604" y="336" textLength="154" lengthAdjust="spacingAndGlyphs" class="g">Ctrl+Alt+Shift+Insert</text>
<use href="#folder" x="469" y="349" width="18" height="15"/>
<text x="494" y="362" textLength="30" lengthAdjust="spacingAndGlyphs">目录</text>
<use href="#cpp" x="469" y="373" width="18" height="19"/>
<text x="494" y="388" textLength="51" lengthAdjust="spacingAndGlyphs">C++ 类</text>
<use href="#cc" x="469" y="399" width="18" height="19"/>
<text x="494" y="415" textLength="97" lengthAdjust="spacingAndGlyphs">C/C++ 源文件</text>
<use href="#hh" x="469" y="426" width="18" height="19"/>
<text x="494" y="441" textLength="97" lengthAdjust="spacingAndGlyphs">C/C++ 头文件</text>
<circle cx="478" cy="462" r="9" fill="none" stroke="#5db0dc" stroke-width="1.400"/><path d="M478 455l2 5h5l-4 3 2 5-5-3-5 3 2-5-4-3h5z" fill="#6e6e6e"/>
<text x="494" y="467" textLength="89" lengthAdjust="spacingAndGlyphs">Image Asset</text>
<rect x="468" y="479" width="290" height="2" fill="#cfcfcf"/>
<use href="#gear" x="470" y="491" width="16" height="16" color="#a8a8a8"/>
<text x="494" y="504" textLength="105" lengthAdjust="spacingAndGlyphs">编辑器配置文件</text>

<!-- red annotations -->
<g fill="#f33535">
<path d="M87 306L119 359L96 360L88 465L73 362L53 364Z"/>
<circle cx="122.500" cy="464" r="33.500"/>
<path d="M321 326L363 378L348 381L350 482L320 386L302.500 388Z"/>
<circle cx="385" cy="509" r="33.500"/>
<path d="M552.300 314L583.300 348.300L571.700 351.700L575 426.700L555 356.700L537.300 357.300Z"/>
<circle cx="640" cy="418" r="33.500"/>
</g>
<text class="d" x="122.500" y="479">1</text>
<text class="d" x="385" y="524">2</text>
<text class="d" x="640" y="433">3</text>
</svg>
</body></html>
